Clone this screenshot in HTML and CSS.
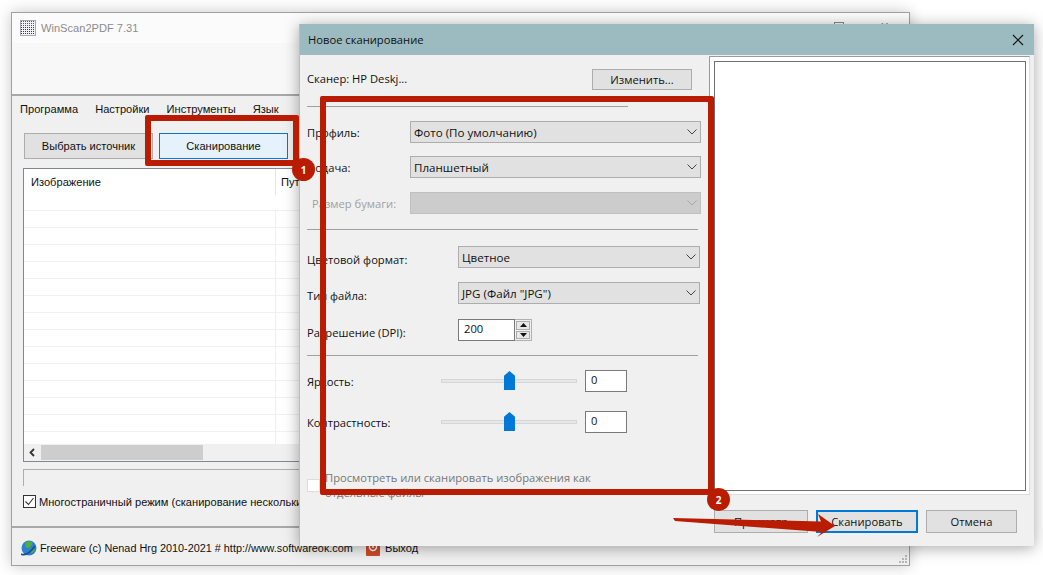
FILE: index.html
```html
<!DOCTYPE html>
<html lang="ru">
<head>
<meta charset="utf-8">
<title>WinScan2PDF</title>
<link rel="stylesheet" href="styles.css">
</head>
<body>
<div class="desktop">
  <section class="window main-win">
    <header class="main-title">
      <svg class="app-icon" width="16" height="16" viewBox="0 0 16 16">
        <rect x="0" y="0" width="16" height="16" fill="#a9a9b4"/>
        <rect x="1" y="1" width="14" height="14" fill="#f2f2f6"/>
        <path d="M1 1.500h14M1 3.500h14M1 5.500h14" stroke="#d8202c" stroke-dasharray="1 1"/>
        <path d="M1 7.500h14M1 9.500h14M1 11.500h14M1 13.500h14" stroke="#1a2fd0" stroke-dasharray="1 1"/>
      </svg>
      <span class="main-title-text">WinScan2PDF 7.31</span>
      <span class="win-ctrls"><i class="max-ico"></i><i class="close-ico">✕</i></span>
    </header>
    <div class="toolbar-blank"></div>
    <nav class="menu"><span>Программа</span><span>Настройки</span><span>Инструменты</span><span>Язык</span></nav>
    <div class="main-btns">
      <button class="btn btn-source">Выбрать источник</button>
      <button class="btn btn-scan">Сканирование</button>
    </div>
    <div class="list">
      <div class="list-head"><span class="col-a">Изображение</span><span class="col-b">Путь</span></div>
      <div class="list-rows">
        <div class="row"></div><div class="row"></div><div class="row"></div><div class="row"></div><div class="row"></div>
        <div class="row"></div><div class="row"></div><div class="row"></div><div class="row"></div><div class="row"></div>
        <div class="row"></div><div class="row"></div><div class="row"></div><div class="row"></div>
      </div>
      <div class="hscroll"><svg class="arrow-left" width="17" height="15" viewBox="0 0 17 15"><path d="M10 4L6.500 7.500 10 11" fill="none" stroke="#333" stroke-width="1.800"/></svg><span class="thumb"></span></div>
    </div>
    <div class="progress"></div>
    <label class="multi"><span class="chk"><svg width="13" height="13" viewBox="0 0 13 13"><path d="M2.500 6.500l3 3 5-6.500" fill="none" stroke="#333" stroke-width="1.100"/></svg></span>Многостраничный режим (сканирование нескольких страниц в один PDF)</label>
    <footer class="status">
      <svg class="globe" width="16" height="16" viewBox="0 0 16 16">
        <circle cx="8" cy="8" r="7.500" fill="#2f7fd0"/>
        <path d="M5 2c2-1 5-1 6 0 1 2-1 4-2 5-1 2-3 1-4 0-1-1-1-4 0-5zM10 9c2-1 4 0 4 1-1 2-2 3-4 3-1-1-1-3 0-4z" fill="#4fae3c"/>
        <path d="M0 14c4 2 9-1 14-8" stroke="#1b4f90" stroke-width="1.800" fill="none"/>
      </svg>
      <span class="free">Freeware (c) Nenad Hrg 2010-2021 # http://www.softwareok.com</span>
      <svg class="exit-ico" width="14" height="16" viewBox="0 0 14 16">
        <rect width="14" height="16" rx="1" fill="#d0492a"/>
        <path d="M4.500 4.500a3.500 3.500 0 1 0 5 0" fill="none" stroke="#fff" stroke-width="1.500"/>
        <path d="M7 2v6" stroke="#fff" stroke-width="1.500"/>
      </svg>
      <span class="exit-text">Выход</span>
    </footer>
    <svg class="grip" width="10" height="10" viewBox="0 0 10 10"><path d="M7 1h2v2H7zM4 4h2v2H4zM7 4h2v2H7zM1 7h2v2H1zM4 7h2v2H4zM7 7h2v2H7z" fill="#b8b8b8"/></svg>
  </section>

  <section class="window dialog">
    <header class="dlg-title">
      <span>Новое сканирование</span>
      <svg width="12" height="12" viewBox="0 0 12 12"><path d="M1 1l10 10M11 1L1 11" stroke="#111" stroke-width="1.100"/></svg>
    </header>
    <div class="dlg-body">
      <div class="pane-left">
        <div class="scanner-row"><span>Сканер: HP Deskj...</span><button class="btn btn-change">Изменить...</button></div>
        <hr class="sep sep-short">
        <div class="form-row row-first"><label>Профиль:</label><div class="select sel-wide">Фото (По умолчанию)<svg class="chev" width="10" height="6" viewBox="0 0 10 6"><path d="M.5.500l4.500 4.500 4.500-4.500" fill="none" stroke="#444"/></svg></div></div>
        <div class="form-row row-13"><label>Подача:</label><div class="select sel-wide">Планшетный<svg class="chev" width="10" height="6" viewBox="0 0 10 6"><path d="M.5.500l4.500 4.500 4.500-4.500" fill="none" stroke="#444"/></svg></div></div>
        <div class="form-row row-14"><label class="disabled indent">Размер бумаги:</label><div class="select sel-wide sel-off"><svg class="chev" width="10" height="6" viewBox="0 0 10 6"><path d="M.5.500l4.500 4.500 4.500-4.500" fill="none" stroke="#a8a8a8"/></svg></div></div>
        <hr class="sep sep-long sep-15">
        <div class="form-row row-first2"><label class="lab2">Цветовой формат:</label><div class="select sel-mid">Цветное<svg class="chev" width="10" height="6" viewBox="0 0 10 6"><path d="M.5.500l4.500 4.500 4.500-4.500" fill="none" stroke="#444"/></svg></div></div>
        <div class="form-row row-14"><label class="lab2">Тип файла:</label><div class="select sel-mid">JPG (Файл "JPG")<svg class="chev" width="10" height="6" viewBox="0 0 10 6"><path d="M.5.500l4.500 4.500 4.500-4.500" fill="none" stroke="#444"/></svg></div></div>
        <div class="form-row row-15"><label class="lab2">Разрешение (DPI):</label>
          <div class="spin"><span class="spin-val">200</span><span class="spin-btns">
            <i><svg width="7" height="4" viewBox="0 0 7 4"><path d="M3.500 0L7 4H0z" fill="#111"/></svg></i>
            <i><svg width="7" height="4" viewBox="0 0 7 4"><path d="M0 0h7L3.500 4z" fill="#111"/></svg></i>
          </span></div>
        </div>
        <hr class="sep sep-long sep-14">
        <div class="form-row row-14b"><label class="lab3">Яркость:</label><div class="slider"><i class="thumb-s"></i></div><div class="num">0</div></div>
        <div class="form-row row-19"><label class="lab3">Контрастность:</label><div class="slider"><i class="thumb-s"></i></div><div class="num">0</div></div>
        <div class="sep-check"><span class="chk-off"></span><span class="chk-text">Просмотреть или сканировать изображения как<br>отдельные файлы</span></div>
      </div>
      <div class="pane-right"><div class="preview"></div></div>
    </div>
    <footer class="dlg-foot">
      <button class="btn btn-foot">Просмотр</button>
      <button class="btn btn-foot btn-primary">Сканировать</button>
      <button class="btn btn-foot btn-cancel">Отмена</button>
    </footer>
  </section>

  <div class="mark mark-1"></div>
  <div class="mark mark-2"></div>
  <span class="badge badge-1">1</span>
  <span class="badge badge-2">2</span>
  <svg class="arrow" width="170" height="30" viewBox="0 0 170 30">
    <path d="M0 4L148 7.500 145 0 162 12 144 23 149 18 2 7Z" fill="#b91c00"/>
  </svg>
</div>
</body>
</html>
```
FILE: styles.css
```css
* { box-sizing: border-box; }
html, body { margin: 0; height: 100%; background: #fff; overflow: hidden; }
body { font-family: "Open Sans", "Noto Sans", sans-serif; font-size: 11.2px; color: #111; }
.desktop { position: relative; width: 1043px; height: 575px; overflow: hidden; }
.window { position: absolute; display: flex; flex-direction: column; background: #f0f0f0; }
.main-win { left: 11px; top: 12px; width: 899px; height: 554px; border: 1px solid #a0a0a0; box-shadow: 0 0 14px rgba(0,0,0,.22); font-family: "Liberation Sans", Arial, sans-serif; font-size: 11.1px; }
.main-title { height: 30px; flex: none; background: #fbfbfb; display: flex; align-items: center; padding-left: 8px; position: relative; }
.app-icon { flex: none; }
.main-title-text { margin-left: 5px; font-size: 11.1px; color: #8c8c8c; }
.win-ctrls { position: absolute; left: 822px; top: 9px; font-style: normal; }
.max-ico { position: absolute; left: 0; top: 0; width: 10px; height: 10px; border: 1px solid #888; }
.close-ico { position: absolute; left: 46px; top: -2px; font-style: normal; font-size: 11px; color: #888; }
.toolbar-blank { height: 51px; flex: none; background: #f8f8f8; border-bottom: 2px solid #a8a8a8; box-sizing: content-box; }
.menu { display: flex; gap: 17px; margin: 5px 0 0 8px; height: 17px; align-items: center; line-height: 17px; }
.main-btns { display: flex; gap: 6px; margin: 15px 0 0 12px; }
.btn { font: inherit; color: #111; background: #e1e1e1; border: 1px solid #adadad; padding: 0; }
.btn-source { width: 129px; height: 26px; }
.btn-scan { width: 129px; height: 26px; background: #e5f1fb; border-color: #0078d7; }
.list { margin: 9px 0 0 11px; width: 880px; height: 294px; border: 1px solid #828790; border-right: 0; background: #fff; display: flex; flex-direction: column; }
.list-head { height: 26px; flex: none; position: relative; display: flex; align-items: center; padding-left: 7px; }
.col-a { width: 244px; }
.col-b { padding-left: 5px; border-left: 1px solid #e4e4e4; height: 100%; line-height: 26px; }
.list-rows { flex: 1; overflow: hidden; margin-top: 15px; }
.row { height: 17px; border-top: 1px solid #f0f0f0; position: relative; }
.row::after { content: ""; position: absolute; left: 251px; top: 0; bottom: 0; border-left: 1px solid #f0f0f0; }
.hscroll { height: 17px; flex: none; background: #f0f0f0; display: flex; align-items: stretch; padding: 1px 0; }
.arrow-left { flex: none; }
.thumb { width: 162px; background: #cdcdcd; }
.progress { margin: 7px 0 0 11px; width: 880px; height: 17px; border: 1px solid #adadad; border-bottom: 0; border-right: 0; background: #f0f0f0; }
.multi { display: flex; align-items: center; margin: 9px 0 0 11px; height: 13px; white-space: nowrap; }
.chk { width: 13px; height: 13px; border: 1px solid #333; background: #fff; margin-right: 3px; flex: none; position: relative; }
.chk svg { position: absolute; left: -1px; top: -1px; }
.status { margin-top: 18px; height: 37px; flex: none; border-top: 2px solid #a8a8a8; display: flex; align-items: center; padding: 5px 0 0 9px; position: relative; }
.globe { flex: none; }
.free { margin-left: 3px; width: 317px; white-space: nowrap; font-size: 10.85px; }
.exit-ico { margin-left: 9px; flex: none; }
.exit-text { margin-left: 5px; }
.grip { position: absolute; right: 1px; bottom: 1px; }

.dialog { left: 299px; top: 24px; width: 735px; height: 522px; border-left: 1px solid #a9c4ca; box-shadow: 0 2px 14px rgba(0,0,0,.35); }
.dlg-title { height: 31px; flex: none; background: #9cbbc0; display: flex; justify-content: space-between; align-items: center; padding: 0 10px 0 8px; color: #111; }
.dlg-body { display: flex; height: 440px; flex: none; }
.pane-left { width: 409px; flex: none; padding: 14px 8px 0 7px; }
.scanner-row { display: flex; justify-content: space-between; align-items: center; height: 21px; width: 385px; }
.scanner-row span { position: relative; top: -1px; }
.btn-change { width: 100px; height: 21px; }
.sep { border: 0; height: 1px; margin: 0; background: #a0a0a0; }
.sep-short { width: 321px; margin-top: 16px; }
.sep-long { width: 391px; }
.sep-15 { margin-top: 15px; }
.sep-14 { margin-top: 14px; }
.form-row { display: flex; align-items: center; height: 22px; }
.form-row label { flex: none; width: 103px; position: relative; top: 0; }
.form-row .lab2 { width: 151px; top: 2px; }
.form-row .lab3 { width: 134px; }
.indent { padding-left: 5px; }
.disabled { color: #a0a0a0; }
.row-first { margin-top: 14px; }
.row-first2 { margin-top: 16px; }
.row-13 { margin-top: 13px; }
.row-14 { margin-top: 14px; }
.row-14b { margin-top: 14px; }
.row-15 { margin-top: 15px; }
.row-19 { margin-top: 19px; }
.select { position: relative; height: 22px; background: #e1e1e1; border: 1px solid #adadad; padding-left: 3px; line-height: 21px; font-size: 11.6px; }
.sel-wide { width: 291px; }
.sel-mid { width: 242px; }
.sel-off { background: #ccc; border-color: #c0c0c0; }
.chev { position: absolute; right: 3px; top: 7px; }
.spin { width: 74px; height: 22px; display: flex; }
.spin-val { width: 57px; background: #fff; border: 1px solid #7a7a7a; padding-left: 5px; line-height: 18px; }
.spin-btns { width: 17px; display: flex; flex-direction: column; gap: 1px; padding: 1px; border: 1px solid #b0b0b0; border-left: 0; }
.spin-btns i { flex: 1; background: #e8e8e8; border: 1px solid #adadad; display: flex; align-items: center; justify-content: center; }
.slider { position: relative; width: 136px; height: 4px; background: #e7e7e7; border: 1px solid #d6d6d6; }
.thumb-s { position: absolute; left: 62px; top: -9px; width: 11px; height: 19px; background: #0078d7; clip-path: polygon(50% 0, 100% 25%, 100% 100%, 0 100%, 0 25%); }
.num { width: 42px; height: 22px; margin-left: 8px; background: #fff; border: 1px solid #7a7a7a; padding-left: 5px; line-height: 18px; }
.sep-check { display: flex; margin-top: 45px; align-items: flex-start; }
.chk-off { width: 13px; height: 13px; margin-top: 1px; background: #fff; border: 1px solid #ddd; flex: none; margin-right: 5px; }
.chk-text { color: #777; line-height: 15px; position: relative; top: -8px; }
.pane-right { flex: 1; margin: 1px 4px 0 0; border: 1px solid #9a9a9a; border-bottom: 1px solid #dcdcdc; border-right: 1px solid #dcdcdc; background: #fff; padding: 4px 3px 3px 4px; }
.preview { height: 100%; border: 1px solid #707070; background: #fff; }
.dlg-foot { display: flex; gap: 8px; padding: 15px 0 0 414px; }
.btn-foot { width: 94px; height: 23px; }
.btn-primary { width: 102px; border: 2px solid #0078d7; background: #e1e1e1; }
.btn-cancel { width: 91px; }

.mark { position: absolute; border: 6px solid #b91c00; border-radius: 2px; }
.mark-1 { left: 145px; top: 115px; width: 154px; height: 51px; }
.mark-2 { left: 320px; top: 96px; width: 394px; height: 399px; }
.badge { position: absolute; width: 23px; height: 23px; border-radius: 50%; background: #b91c00; color: #fff; font-size: 10px; font-weight: 700; display: flex; align-items: center; justify-content: center; }
.badge-1 { left: 292px; top: 158px; }
.badge-2 { left: 707px; top: 488px; }
.arrow { position: absolute; left: 673px; top: 514px; }
```
